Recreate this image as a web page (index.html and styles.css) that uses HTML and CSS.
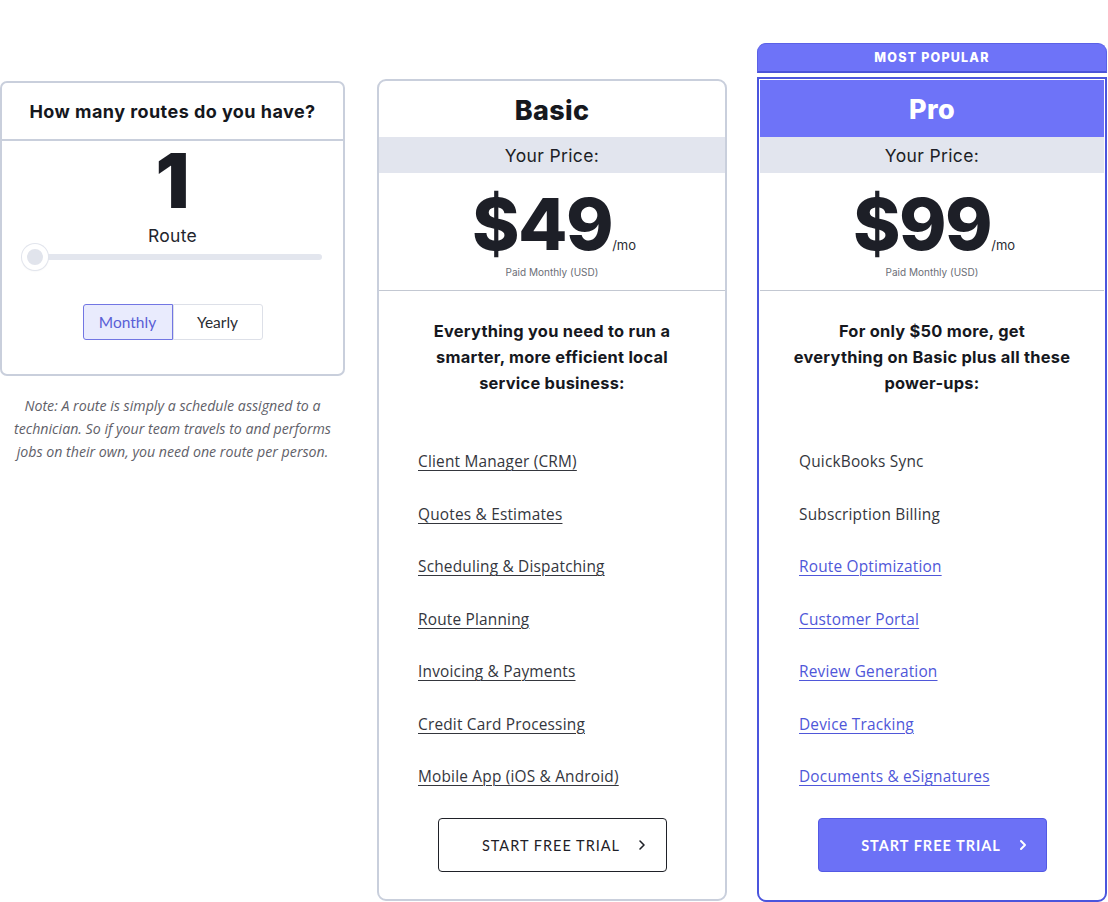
FILE: index.html
```html
<!DOCTYPE html>
<html lang="en">
<head>
<meta charset="utf-8">
<title>Pricing</title>
<link rel="stylesheet" href="styles.css">
</head>
<body>
<main class="pricing">
  <section class="routes-col">
    <div class="routes-card">
      <h2 class="routes-title">How many routes do you have?</h2>
      <div class="routes-body">
        <div class="routes-count">1</div>
        <div class="routes-label">Route</div>
        <div class="slider">
          <div class="slider-track"></div>
          <div class="slider-thumb"></div>
        </div>
        <div class="billing-toggle">
          <button class="toggle-btn is-active">Monthly</button>
          <button class="toggle-btn">Yearly</button>
        </div>
      </div>
    </div>
    <p class="routes-note">Note: A route is simply a schedule assigned to a<br>technician. So if your team travels to and performs<br>jobs on their own, you need one route per person.</p>
  </section>

  <section class="plan plan-basic">
    <div class="plan-card">
      <h2 class="plan-name">Basic</h2>
      <div class="price-band">Your Price:</div>
      <div class="price-box">
        <div class="price"><span class="amount">$49</span><span class="per">/mo</span></div>
        <div class="paid">Paid Monthly (USD)</div>
      </div>
      <p class="plan-desc">Everything you need to run a<br>smarter, more efficient local<br>service business:</p>
      <ul class="features">
        <li><a href="#">Client Manager (CRM)</a></li>
        <li><a href="#">Quotes &amp; Estimates</a></li>
        <li><a href="#">Scheduling &amp; Dispatching</a></li>
        <li><a href="#">Route Planning</a></li>
        <li><a href="#">Invoicing &amp; Payments</a></li>
        <li><a href="#">Credit Card Processing</a></li>
        <li><a href="#">Mobile App (iOS &amp; Android)</a></li>
      </ul>
      <a class="cta cta-outline" href="#">START FREE TRIAL<svg class="chev" width="8" height="12" viewBox="0 0 8 12"><polyline points="2,2 6,6 2,10" fill="none" stroke="currentColor" stroke-width="1.6" stroke-linecap="round" stroke-linejoin="round"/></svg></a>
    </div>
  </section>

  <section class="plan plan-pro">
    <div class="popular-tab">MOST POPULAR</div>
    <div class="plan-card">
      <h2 class="plan-name">Pro</h2>
      <div class="price-band">Your Price:</div>
      <div class="price-box">
        <div class="price"><span class="amount">$99</span><span class="per">/mo</span></div>
        <div class="paid">Paid Monthly (USD)</div>
      </div>
      <p class="plan-desc">For only $50 more, get<br>everything on Basic plus all these<br>power-ups:</p>
      <ul class="features">
        <li><span>QuickBooks Sync</span></li>
        <li><span>Subscription Billing</span></li>
        <li><a href="#">Route Optimization</a></li>
        <li><a href="#">Customer Portal</a></li>
        <li><a href="#">Review Generation</a></li>
        <li><a href="#">Device Tracking</a></li>
        <li><a href="#">Documents &amp; eSignatures</a></li>
      </ul>
      <a class="cta cta-filled" href="#">START FREE TRIAL<svg class="chev" width="8" height="12" viewBox="0 0 8 12"><polyline points="2,2 6,6 2,10" fill="none" stroke="currentColor" stroke-width="2" stroke-linecap="round" stroke-linejoin="round"/></svg></a>
    </div>
  </section>
</main>
</body>
</html>
```

FILE: styles.css
```css
* { box-sizing: border-box; }

html, body {
  margin: 0;
  padding: 0;
  background: #ffffff;
}

body {
  font-family: "Open Sans", "Noto Sans", sans-serif;
  color: #1c1e26;
}

.pricing {
  display: flex;
  align-items: flex-start;
  padding-top: 43px;
  width: 1108px;
}

/* ---------- Routes column ---------- */
.routes-col {
  width: 345px;
  margin-top: 38px;
}

.routes-card {
  border: 2px solid #c9cfdc;
  border-radius: 7px;
  background: #fff;
}

.routes-title {
  margin: 0;
  height: 58px;
  display: flex;
  align-items: center;
  justify-content: center;
  font-family: "Inter", sans-serif;
  font-weight: 700;
  font-size: 18px;
  letter-spacing: 0.45px;
  color: #15171d;
  border-bottom: 2px solid #c9cfdc;
}

.routes-body {
  display: flex;
  flex-direction: column;
  align-items: center;
  padding: 9px 0 34px;
}

.routes-count {
  font-family: "Inter", sans-serif;
  font-weight: 900;
  font-size: 75px;
  line-height: 62px;
  color: #1b1d24;
}

.routes-label {
  font-family: "Inter", sans-serif;
  font-size: 17.5px;
  line-height: 22px;
  letter-spacing: 0.3px;
  color: #23252d;
  margin-top: 13px;
}

.slider {
  position: relative;
  width: 300px;
  height: 26px;
  margin-top: -3px;
  margin-left: -2px;
}

.slider-track {
  position: absolute;
  left: 2px;
  right: 0;
  top: 10px;
  height: 6px;
  border-radius: 3px;
  background: #e3e6ee;
}

.slider-thumb {
  position: absolute;
  left: 0;
  top: 0;
  width: 26px;
  height: 26px;
  border-radius: 50%;
  background: #e1e4ec;
  border: 5px solid #fff;
  box-shadow: 0 0 0 1px #e2e5ed, 0 1px 2px rgba(0,0,0,0.08);
}

.billing-toggle {
  display: flex;
  margin-top: 34px;
}

.toggle-btn {
  width: 90px;
  height: 36px;
  font-family: "Lato", sans-serif;
  font-size: 15.5px;
  color: #2a2c33;
  background: #fff;
  border: 1px solid #dde0e8;
  border-radius: 0 3px 3px 0;
  padding: 0;
  cursor: pointer;
}

.toggle-btn.is-active {
  background: #e9ebfd;
  border-color: #7276e3;
  color: #5a5fd6;
  border-radius: 3px 0 0 3px;
}

.routes-note {
  margin: 18px 0 0;
  padding: 0;
  text-align: center;
  font-family: "Open Sans", sans-serif;
  font-style: italic;
  font-size: 14.2px;
  line-height: 23px;
  color: #5f6169;
  white-space: nowrap;
}

/* ---------- Plan cards ---------- */
.plan {
  width: 350px;
}

.plan-basic {
  margin-left: 32px;
  margin-top: 36px;
}

.plan-pro {
  margin-left: 30px;
}

.plan-card {
  display: flex;
  flex-direction: column;
  align-items: stretch;
  background: #fff;
  border: 2px solid #c9cfdc;
  border-radius: 9px;
  padding: 0 0 27px;
}

.plan-pro .plan-card {
  border-color: #4b55dd;
  border-radius: 0 0 9px 9px;
  padding: 1px 1px 28px;
}

.popular-tab {
  height: 30px;
  margin-bottom: 4px;
  background: #6e73f8;
  border-radius: 9px 9px 0 0;
  border: 1px solid #5b61e6;
  border-bottom: 2px solid #4c54d9;
  color: #fff;
  font-family: "Inter", sans-serif;
  font-weight: 800;
  font-size: 12.5px;
  letter-spacing: 1.2px;
  display: flex;
  align-items: center;
  justify-content: center;
}

.plan-name {
  margin: 0;
  height: 56px;
  padding-top: 2px;
  display: flex;
  align-items: center;
  justify-content: center;
  font-family: "Inter", sans-serif;
  font-weight: 800;
  font-size: 27px;
  letter-spacing: 0.3px;
  color: #16181e;
}

.plan-pro .plan-name {
  background: #6e73f8;
  color: #fff;
  height: 57px;
}

.price-band {
  height: 36px;
  background: #e2e5ee;
  display: flex;
  align-items: center;
  justify-content: center;
  font-family: "Inter", sans-serif;
  font-size: 17.5px;
  letter-spacing: 0.35px;
  color: #1c1e26;
}

.price-box {
  display: flex;
  flex-direction: column;
  align-items: center;
  padding-top: 17px;
  height: 118px;
  border-bottom: 1px solid #c3c8d2;
}

.price {
  display: flex;
  align-items: baseline;
  padding-left: 4px;
}

.amount {
  font-family: "Inter", sans-serif;
  font-weight: 800;
  font-size: 72px;
  line-height: 68px;
  letter-spacing: -1.5px;
  color: #1d1f27;
}

.per {
  font-family: "Inter", sans-serif;
  font-size: 13px;
  color: #2a2c33;
  margin-left: 0;
}

.paid {
  font-family: "Inter", sans-serif;
  font-size: 10px;
  line-height: 12px;
  color: #6b6e76;
  margin-top: 8px;
}

.plan-desc {
  margin: 27px 0 0;
  padding: 0;
  text-align: center;
  font-family: "Inter", sans-serif;
  font-weight: 700;
  font-size: 16.4px;
  line-height: 26px;
  letter-spacing: 0.25px;
  color: #16181e;
  white-space: nowrap;
}

.features {
  list-style: none;
  margin: 55px 0 0;
  padding: 0 0 0 39px;
  display: flex;
  flex-direction: column;
  gap: 30.5px;
}

.features li {
  font-family: "Open Sans", sans-serif;
  font-size: 15.4px;
  line-height: 22px;
  letter-spacing: 0.2px;
  color: #34363d;
}

.features a {
  color: #34363d;
  text-decoration: underline;
  text-underline-offset: 3px;
  text-decoration-thickness: 1px;
}

.plan-pro .features a {
  color: #4f57d9;
}

.cta {
  align-self: center;
  margin-top: 30px;
  width: 229px;
  height: 54px;
  display: flex;
  align-items: center;
  justify-content: center;
  padding-left: 24px;
  border-radius: 4px;
  font-family: "Lato", sans-serif;
  font-size: 14.5px;
  letter-spacing: 1px;
  text-decoration: none;
}

.chev {
  margin-left: 18px;
}

.cta-outline {
  border: 1.5px solid #1f2128;
  color: #1f2128;
  font-weight: 400;
}

.cta-filled {
  background: #6c71f6;
  border: 1px solid #5359e4;
  color: #fff;
  font-weight: 700;
}
```
